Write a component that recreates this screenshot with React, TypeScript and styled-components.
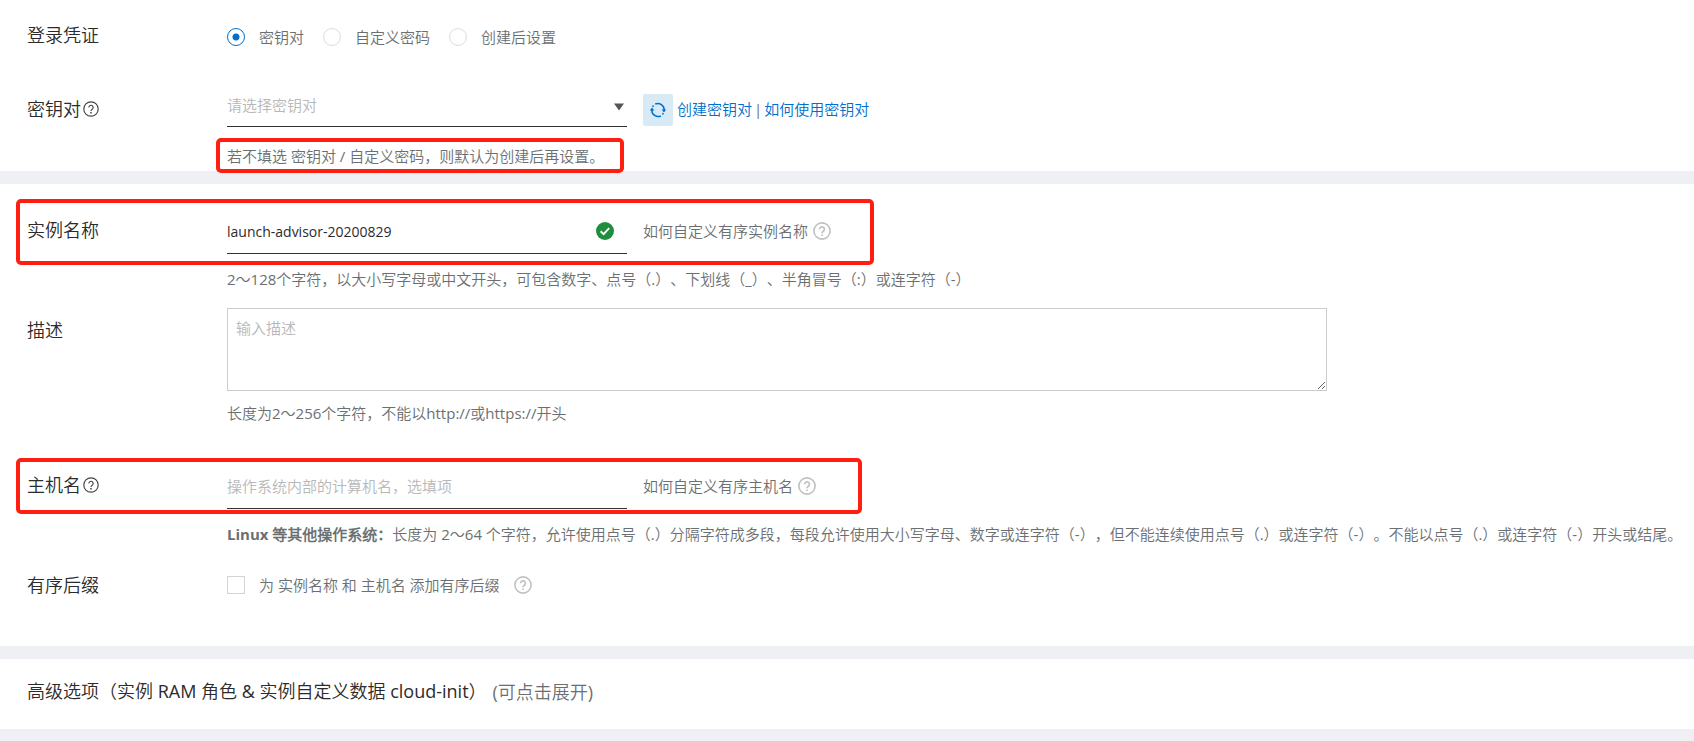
import React, { useState } from "react";
import styled, { createGlobalStyle, css } from "styled-components";

const color = {
  page: "#eff0f4",
  panel: "#ffffff",
  title: "#2b2b2b",
  text: "#6b6f72",
  hint: "#b8b8b8",
  line: "#333333",
  border: "#cccccc",
  link: "#0070cc",
  ok: "#1e8e3e",
  mark: "#ff1e10",
};

const GlobalStyle = createGlobalStyle`
  *, *::before, *::after { box-sizing: border-box; }
  body {
    margin: 0;
    background: ${color.page};
    color: ${color.text};
    font-family: "Open Sans", "Noto Sans CJK SC DemiLight", "Noto Sans CJK SC Light", "Noto Sans CJK SC", sans-serif;
    font-size: 15px;
    line-height: 24px;
    text-spacing-trim: space-all;
  }
  button, input, select, textarea { font: inherit; color: inherit; margin: 0; }
`;

const Page = styled.main`
  display: flex;
  flex-direction: column;
  gap: 13px;
  padding-bottom: 12px;
`;

const Panel = styled.section<{ $top: number; $bottom: number }>`
  background: ${color.panel};
  padding: ${(p) => p.$top}px 8px ${(p) => p.$bottom}px 27px;
`;

const Row = styled.div<{ $gap?: number }>`
  position: relative;
  display: grid;
  grid-template-columns: 200px minmax(0, 1fr);
  margin-top: ${(p) => p.$gap ?? 0}px;
`;

const Caption = styled.div<{ $height?: number }>`
  display: flex;
  align-items: center;
  gap: 2px;
  height: ${(p) => p.$height ?? 36}px;
  color: ${color.title};
  font-size: 18px;
`;

const Field = styled.div`
  min-width: 0;
`;

const Line = styled.div<{ $end?: boolean; $gap?: number }>`
  display: flex;
  align-items: ${(p) => (p.$end ? "flex-end" : "center")};
  gap: ${(p) => p.$gap ?? 16}px;
`;

const Options = styled.div`
  display: flex;
  align-items: center;
  gap: 19px;
  height: 36px;
`;

const Option = styled.label`
  display: flex;
  align-items: center;
  gap: 14px;
`;

const Radio = styled.input.attrs({ type: "radio" })`
  appearance: none;
  width: 18px;
  height: 18px;
  border: 1px solid #dddddd;
  border-radius: 50%;
  background: #ffffff;
  &:checked {
    border-color: ${color.link};
    background: radial-gradient(circle, ${color.link} 0 3px, #ffffff 4px);
  }
`;

const Checkbox = styled.input.attrs({ type: "checkbox" })`
  appearance: none;
  width: 18px;
  height: 18px;
  border: 1px solid #d4d4d4;
  background: #ffffff;
  &:checked {
    background: ${color.link};
  }
`;

const Control = styled.div`
  position: relative;
  flex: 0 0 400px;
`;

const Adornment = styled.span<{ $right: number; $bottom?: number }>`
  position: absolute;
  top: 0;
  bottom: ${(p) => p.$bottom ?? 0}px;
  right: ${(p) => p.$right}px;
  display: flex;
  align-items: center;
  pointer-events: none;
`;

const underlined = css`
  display: block;
  width: 100%;
  padding: 0 0 3px;
  border: 0;
  border-bottom: 1px solid ${color.line};
  border-radius: 0;
  background: transparent;
  outline: none;
`;

const Select = styled.select`
  ${underlined}
  appearance: none;
  height: 40px;
  color: ${color.hint};
`;

const TextInput = styled.input`
  ${underlined}
  height: 42px;
  color: ${color.title};
  font-size: 14px;
  &::placeholder {
    color: ${color.hint};
    font-size: 15px;
  }
`;

const TextArea = styled.textarea`
  display: block;
  width: 100%;
  max-width: 1100px;
  height: 83px;
  padding: 7px 8px;
  border: 1px solid ${color.border};
  background: #ffffff;
  outline: none;
  resize: both;
  &::placeholder {
    color: ${color.hint};
  }
`;

const Help = styled.p<{ $gap?: number }>`
  margin: ${(p) => p.$gap ?? 13}px 0 0;
  padding-bottom: 1px;
`;

const Suffix = styled.div`
  display: flex;
  align-items: center;
  gap: 5px;
  padding-bottom: 4px;
`;

const Actions = styled.div`
  display: flex;
  align-items: center;
  gap: 4px;
  padding-bottom: 1px;
`;

const Links = styled.div`
  display: flex;
  align-items: center;
  gap: 2px;
  padding-bottom: 3px;
`;

const RefreshButton = styled.button`
  display: flex;
  align-items: center;
  justify-content: center;
  width: 30px;
  height: 32px;
  padding: 0;
  border: 0;
  border-radius: 2px;
  background: #d9eaf7;
  color: ${color.link};
`;

const IconButton = styled.button<{ $light?: boolean }>`
  display: flex;
  padding: 0;
  border: 0;
  background: none;
  color: ${(p) => (p.$light ? "#c1c1c1" : "#444444")};
`;

const Link = styled.a`
  color: ${color.link};
  text-decoration: none;
`;

const Advanced = styled.button`
  display: flex;
  align-items: center;
  gap: 6px;
  padding: 0;
  border: 0;
  background: none;
  color: ${color.title};
  font-size: 18px;
`;

const Muted = styled.span`
  padding-top: 2px;
  color: ${color.text};
`;

/* Frame that calls out a part of the form. */
const Mark = styled.span<{ $top: number; $left: number; $width: number; $height: number }>`
  position: absolute;
  z-index: 1;
  top: ${(p) => p.$top}px;
  left: ${(p) => p.$left}px;
  width: ${(p) => p.$width}px;
  height: ${(p) => p.$height}px;
  border: 4px solid ${color.mark};
  border-radius: 5px;
  pointer-events: none;
`;

function HelpIcon({ label, light }: { label: string; light?: boolean }) {
  const size = light ? 18 : 16;
  return (
    <IconButton type="button" aria-label={label} $light={light}>
      <svg width={size} height={size} viewBox="0 0 18 18" fill="none" stroke="currentColor">
        <circle cx="9" cy="9" r="8.1" strokeWidth={light ? 1.6 : 1.3} />
        <path d="M6.6 7.2a2.4 2.4 0 1 1 4 1.8c-.9.8-1.6 1.1-1.6 2.3" strokeWidth={light ? 1.7 : 1.3} />
        <path d="M9 12.4v1.6" strokeWidth="1.7" />
      </svg>
    </IconButton>
  );
}

function RefreshIcon() {
  return (
    <svg width="16" height="16" viewBox="0 0 16 16" fill="none" aria-hidden="true">
      <g stroke="currentColor" strokeWidth="1.5">
        <path d="M5.2 2A6.4 6.4 0 0 1 14.2 8" />
        <path d="M10.8 14A6.4 6.4 0 0 1 1.8 8" />
        <path d="M2.6 4.8a6.4 6.4 0 0 1 1-1.4" />
        <path d="M13.4 11.2a6.4 6.4 0 0 1-1 1.4" />
      </g>
      <path d="M11.6 7.6H16.2L14 10.4z M4.4 8.4H-.2L2 5.6z" fill="currentColor" />
    </svg>
  );
}

function CheckIcon() {
  return (
    <svg width="18" height="18" viewBox="0 0 18 18" aria-hidden="true">
      <circle cx="9" cy="9" r="9" fill={color.ok} />
      <path d="M4.6 9.2l3 2.9 5.6-6" fill="none" stroke="#ffffff" strokeWidth="1.9" />
    </svg>
  );
}

const credentials = ["密钥对", "自定义密码", "创建后设置"];

export default function App() {
  const [credential, setCredential] = useState(credentials[0]);
  const [name, setName] = useState("launch-advisor-20200829");

  return (
    <>
      <GlobalStyle />
      <Page>
        <Panel $top={19} $bottom={2}>
          <Row role="radiogroup" aria-labelledby="credential-caption">
            <Caption id="credential-caption" $height={32}>登录凭证</Caption>
            <Options>
              {credentials.map((item) => (
                <Option key={item}>
                  <Radio
                    name="credential"
                    checked={credential === item}
                    onChange={() => setCredential(item)}
                  />
                  {item}
                </Option>
              ))}
            </Options>
          </Row>
          <Row $gap={32}>
            <Caption $height={44}>
              <label htmlFor="key-pair">密钥对</label>
              <HelpIcon label="密钥对说明" />
            </Caption>
            <Field>
              <Line $end>
                <Control>
                  <Select id="key-pair" defaultValue="">
                    <option value="">请选择密钥对</option>
                  </Select>
                  <Adornment $right={3}>
                    <svg width="10" height="8" viewBox="0 0 10 8" aria-hidden="true">
                      <path d="M0 0.5h10L5 7.5z" fill="#555555" />
                    </svg>
                  </Adornment>
                </Control>
                <Actions>
                  <RefreshButton type="button" aria-label="刷新">
                    <RefreshIcon />
                  </RefreshButton>
                  <Links>
                    <Link href="#create">创建密钥对</Link>|<Link href="#usage">如何使用密钥对</Link>
                  </Links>
                </Actions>
              </Line>
              <Help $gap={17}>若不填选 密钥对 / 自定义密码，则默认为创建后再设置。</Help>
            </Field>
            <Mark $top={51} $left={189} $width={408} $height={35} />
          </Row>
        </Panel>

        <Panel $top={28} $bottom={43}>
          <Row>
            <Caption>
              <label htmlFor="instance-name">实例名称</label>
            </Caption>
            <Field>
              <Line>
                <Control>
                  <TextInput
                    id="instance-name"
                    value={name}
                    onChange={(event) => setName(event.target.value)}
                  />
                  <Adornment $right={13} $bottom={4}>
                    <CheckIcon />
                  </Adornment>
                </Control>
                <Suffix>
                  如何自定义有序实例名称
                  <HelpIcon light label="实例名称说明" />
                </Suffix>
              </Line>
              <Help>
                2～128个字符，以大小写字母或中文开头，可包含数字、点号（.）、下划线（_）、半角冒号（:）或连字符（-）
              </Help>
            </Field>
            <Mark $top={-13} $left={-11} $width={858} $height={66} />
          </Row>
          <Row $gap={16}>
            <Caption $height={44}>
              <label htmlFor="description">描述</label>
            </Caption>
            <Field>
              <TextArea id="description" placeholder="输入描述" />
              <Help $gap={10}>长度为2～256个字符，不能以http://或https://开头</Help>
            </Field>
          </Row>
          <Row $gap={41}>
            <Caption>
              <label htmlFor="host-name">主机名</label>
              <HelpIcon label="主机名说明" />
            </Caption>
            <Field>
              <Line>
                <Control>
                  <TextInput id="host-name" placeholder="操作系统内部的计算机名，选填项" />
                </Control>
                <Suffix>
                  如何自定义有序主机名
                  <HelpIcon light label="有序主机名说明" />
                </Suffix>
              </Line>
              <Help>
                <strong>Linux 等其他操作系统：</strong>长度为 2～64
                个字符，允许使用点号（.）分隔字符成多段，每段允许使用大小写字母、数字或连字符（-），但不能连续使用点号（.）或连字符（-）。不能以点号（.）或连字符（-）开头或结尾。
              </Help>
            </Field>
            <Mark $top={-9} $left={-11} $width={846} $height={56} />
          </Row>
          <Row $gap={20}>
            <Caption>有序后缀</Caption>
            <Line $gap={14}>
              <Option>
                <Checkbox />为 实例名称 和 主机名 添加有序后缀
              </Option>
              <HelpIcon light label="有序后缀说明" />
            </Line>
          </Row>
        </Panel>

        <Panel $top={19} $bottom={25}>
          <Advanced type="button">
            高级选项（实例 RAM 角色 &amp; 实例自定义数据 cloud-init）
            <Muted>(可点击展开)</Muted>
          </Advanced>
        </Panel>
      </Page>
    </>
  );
}
